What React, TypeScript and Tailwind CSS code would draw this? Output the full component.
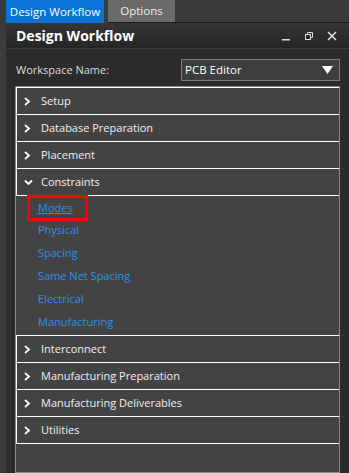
import React from "react";

const font = { fontFamily: '"Open Sans", "Noto Sans", sans-serif' };

const Chevron = ({ open }: { open?: boolean }) =>
  open ? (
    <svg width="9" height="7" viewBox="0 0 9 7" className="shrink-0">
      <path d="M1 1.5 L4.5 5 L8 1.5" stroke="#fff" strokeWidth="1.8" fill="none" />
    </svg>
  ) : (
    <svg width="7" height="9" viewBox="0 0 7 9" className="shrink-0">
      <path d="M1 1 L5 4.5 L1 8" stroke="#fff" strokeWidth="1.8" fill="none" />
    </svg>
  );

const Row = ({ label, open }: { label: string; open?: boolean }) => (
  <div className="flex items-center h-[27px] border-b border-l border-white pl-[7px]">
    <div className="w-[17px] flex justify-start">
      <Chevron open={open} />
    </div>
    <span className="text-[11px] text-[#f0f0f0]">{label}</span>
  </div>
);

const subItems = ["Modes", "Physical", "Spacing", "Same Net Spacing", "Electrical", "Manufacturing"];

export default function App() {
  return (
    <div className="w-[349px] h-[473px] bg-[#3b3b3b] flex flex-col overflow-hidden" style={font}>
      {/* tabs */}
      <div className="flex h-[23px] pl-[6px]">
        <div className="h-[23px] w-[98px] bg-[#0a74d6] text-white text-[11.5px] flex items-center justify-center">
          Design Workflow
        </div>
        <div className="flex-1 flex border-b border-[#1a1a1a] ml-[4px]">
          <div className="h-[22px] w-[67px] bg-[#6a6a6a] text-[#ececec] text-[11.5px] flex items-center justify-center">
            Options
          </div>
        </div>
      </div>
      {/* panel */}
      <div className="flex-1 ml-[6px] bg-[#2b2b2b] flex flex-col">
        <div className="h-[26px] flex items-center justify-between pl-[10px] pr-[12px] bg-gradient-to-b from-[#353535] to-[#262626] border-b border-[#3c3c3c]">
          <span className="text-white font-bold text-[14px]">Design Workflow</span>
          <div className="flex items-center gap-[13px]">
            <svg width="10" height="10" viewBox="0 0 10 10">
              <rect x="1" y="8" width="8" height="1.5" fill="#ddd" />
            </svg>
            <svg width="10" height="10" viewBox="0 0 10 10">
              <rect x="1.5" y="3.5" width="5" height="5" stroke="#ddd" fill="none" />
              <path d="M3.5 3.5 V1.5 H8.5 V6.5 H6.5" stroke="#ddd" fill="none" />
            </svg>
            <svg width="10" height="10" viewBox="0 0 10 10">
              <path d="M1 1 L9 9 M9 1 L1 9" stroke="#e8e8e8" strokeWidth="1.4" />
            </svg>
          </div>
        </div>
        <div className="flex items-center justify-between pl-[10px] pr-[9px] mt-[10px] h-[22px]">
          <span className="text-[11px] text-[#dcdcdc]">Workspace Name:</span>
          <div className="w-[159px] h-[22px] border border-[#7a7a7a] bg-[#3e3e3e] flex items-center justify-between pl-[3px] pr-[6px]">
            <span className="text-[11.5px] text-white">PCB Editor</span>
            <svg width="11" height="8" viewBox="0 0 11 8">
              <path d="M0 0 H11 L5.5 8 Z" fill="#fff" />
            </svg>
          </div>
        </div>
        <div className="flex-1 mt-[5px] ml-[9px] mr-[9px] border border-[#8a8a8a] bg-[#434343]">
          <div className="border-t border-white">
            <Row label="Setup" />
            <Row label="Database Preparation" />
            <Row label="Placement" />
            <Row label="Constraints" open />
          </div>
          <div className="flex flex-col pl-[22px] pb-[1px]">
            {subItems.map((s, i) => (
              <div key={s} className="h-[23px] flex items-center">
                {i === 0 ? (
                  <span className="border-[3px] border-[#ff0000] pl-[8px] pr-[12px] h-[26px] -ml-[11px] mt-[1px] flex items-center text-[11px] text-[#2b8ff0] underline">
                    {s}
                  </span>
                ) : (
                  <span className="text-[11px] text-[#2b8ff0]">{s}</span>
                )}
              </div>
            ))}
          </div>
          <div className="border-t border-white">
            <Row label="Interconnect" />
            <Row label="Manufacturing Preparation" />
            <Row label="Manufacturing Deliverables" />
            <Row label="Utilities" />
          </div>
        </div>
      </div>
    </div>
  );
}
